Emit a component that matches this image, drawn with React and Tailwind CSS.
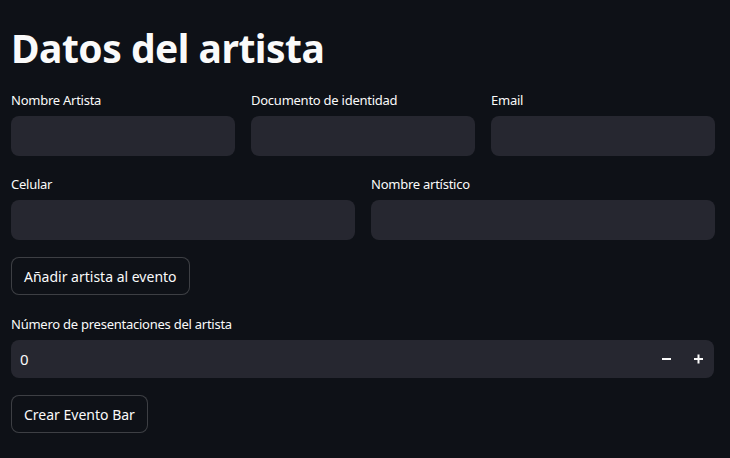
export default function App() {
  const font = { fontFamily: '"Noto Sans", "Liberation Sans", sans-serif' };
  const Label = ({ children }) => (
    <div className="text-[13px] leading-[16px] tracking-[-0.25px] text-[#fafafa] mb-[8px]">{children}</div>
  );
  const Input = () => <div className="h-[40px] rounded-[8px] bg-[#262730]" />;
  return (
    <div className="w-[730px] h-[458px] bg-[#0e1117] text-[#fafafa] px-[11px] pt-[22px] overflow-hidden" style={font}>
      <h1 className="text-[39px] leading-[52px] font-bold tracking-[-0.5px] h-[70px]">Datos del artista</h1>
      <div className="grid grid-cols-3 gap-x-[16px] w-[704px]">
        <div><Label>Nombre Artista</Label><Input /></div>
        <div><Label>Documento de identidad</Label><Input /></div>
        <div><Label>Email</Label><Input /></div>
      </div>
      <div className="grid grid-cols-2 gap-x-[16px] w-[704px] mt-[20px]">
        <div><Label>Celular</Label><Input /></div>
        <div><Label>Nombre artístico</Label><Input /></div>
      </div>
      <button className="mt-[17px] h-[38px] px-[12px] rounded-[8px] border border-[rgba(250,250,250,0.2)] bg-[#0e1117] text-[14px] text-[#fafafa]">Añadir artista al evento</button>
      <div className="mt-[21px]">
        <Label>Número de presentaciones del artista</Label>
        <div className="h-[38px] w-[703px] rounded-[8px] bg-[#262730] flex items-center pl-[9px] pr-[10px]">
          <span className="flex-1 text-[15px]">0</span>
          <svg width="10" height="10" viewBox="0 0 10 10" className="mr-[22px]"><rect x="0" y="4" width="9" height="2" fill="#fafafa"/></svg>
          <svg width="10" height="10" viewBox="0 0 10 10"><rect x="0" y="4" width="9" height="2" fill="#fafafa"/><rect x="3.5" y="0.5" width="2" height="9" fill="#fafafa"/></svg>
        </div>
      </div>
      <button className="mt-[17px] h-[38px] px-[12px] rounded-[8px] border border-[rgba(250,250,250,0.2)] bg-[#0e1117] text-[14px] text-[#fafafa]">Crear Evento Bar</button>
    </div>
  );
}
